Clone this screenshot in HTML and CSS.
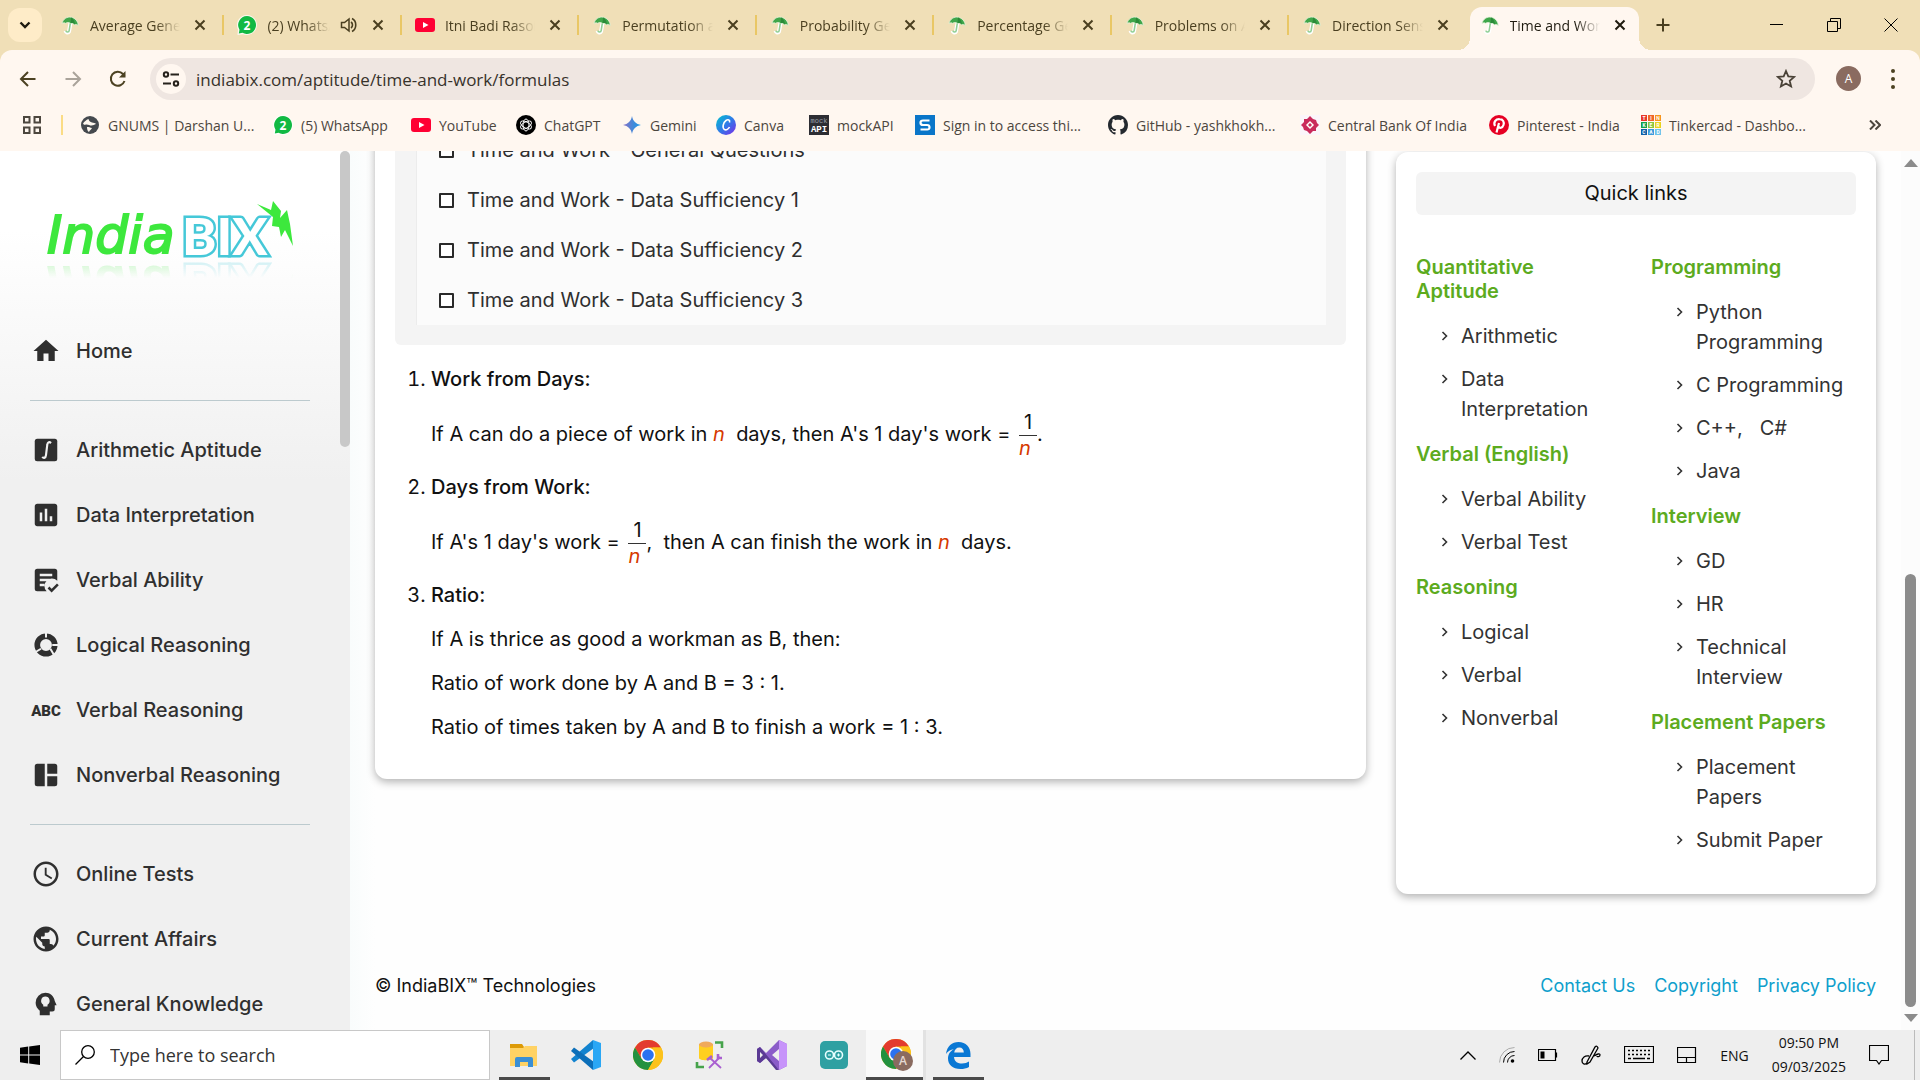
FILE: index.html
```html
<!DOCTYPE html>
<html lang="en">
<head>
<meta charset="utf-8">
<title>Time and Work Formulas</title>
<link rel="stylesheet" href="styles.css">
</head>
<body>
<svg class="defs" aria-hidden="true">
  <symbol id="umbrella" viewBox="0 0 20 20"><path d="M10.500 8 9 16.500a1.800 1.800 0 0 1-3.400-.6" fill="none" stroke="#fff" stroke-width="4"/><path d="M10.500 7 9.200 15.500c-.2 2-3 2.100-3.300.2" fill="none" stroke="#8fcf95" stroke-width="1.600"/><path d="M2 8.500C3 4 7 1.500 11 2.200c4 .6 7 4 7.300 8.200-1.300-1-2.500-1.200-3.600-.6-1.200-1.400-2.600-1.900-4.200-1.500C8.600 7.200 7 7.300 5.600 8.300 4.300 7.600 3.200 7.700 2 8.500z" fill="#3fa64a" stroke="#e6f2dc" stroke-width=".8"/><path d="M10.500 8.300c2-.6 3.500 0 4.200 1.500.4-3-1-6-3.700-7.600" fill="#2b8a39"/></symbol>
  <symbol id="close" viewBox="0 0 20 20"><path d="M5.500 5.500l9 9m0-9l-9 9" stroke="currentColor" stroke-width="2" fill="none"/></symbol>
  <symbol id="wa" viewBox="0 0 20 20"><path d="M10 0a10 10 0 1 1-4 19.200L.5 20 1 14.500A10 10 0 0 1 10 0z" fill="#fff" opacity=".8"/><path d="M10 1a9 9 0 1 1-4.500 16.800L1.800 18.500l.7-3.800A9 9 0 0 1 10 1z" fill="#11b943"/><text x="10" y="14.500" font-size="12" font-weight="700" text-anchor="middle" fill="#fff" font-family="Open Sans">2</text></symbol>
  <symbol id="yt" viewBox="0 0 20 20"><rect y="3" width="20" height="14" rx="3" fill="#ff0033"/><path d="M8 7l5.500 3L8 13z" fill="#fff"/></symbol>
  <symbol id="chev" viewBox="0 0 8 10"><path d="M1.500 1l4 4-4 4" fill="none" stroke="#333" stroke-width="1.600"/></symbol>
  <symbol id="chrome" viewBox="0 0 30 30"><circle cx="15" cy="15" r="15" fill="#fbbc05"/><path d="M2 7.500A15 15 0 0 1 28 7.500H15L8.500 19z" fill="#e33b2e"/><path d="M2 7.500A15 15 0 0 0 15 30l6.500-11.300L8.500 18.700z" fill="#23913f"/><path d="M28 7.500A15 15 0 0 1 15 30l6.500-11.300L20 7.500z" fill="#fcc21b"/><circle cx="15" cy="15" r="7.300" fill="#fff"/><circle cx="15" cy="15" r="5.800" fill="#2b72f0"/></symbol>
</svg>

<header class="browser">
  <div class="strip">
    <button class="tab-search" aria-label="Search tabs"><svg viewBox="0 0 20 20" width="20" height="20"><path d="M5.500 7.500L10 12l4.500-4.500" fill="none" stroke="#1f1b10" stroke-width="2.400"/></svg></button>
    <div class="tabs">
      <div class="tab"><svg class="fav"><use href="#umbrella"/></svg><span class="title">Average General Q</span><button class="x" aria-label="Close tab"><svg><use href="#close"/></svg></button></div>
      <div class="tab"><svg class="fav"><use href="#wa"/></svg><span class="title">(2) WhatsApp</span><svg class="speaker" viewBox="0 0 18 18"><path d="M1.500 6.500h3L9 3v12l-4.500-3.500h-3z" fill="none" stroke="#4a3f20" stroke-width="1.500"/><path d="M11 6c2 1.500 2 4.500 0 6M12 2.500c5 2.500 5 10.500 0 13" fill="none" stroke="#4a3f20" stroke-width="1.600"/></svg><button class="x" aria-label="Close tab"><svg><use href="#close"/></svg></button></div>
      <div class="tab"><svg class="fav"><use href="#yt"/></svg><span class="title">Itni Badi Rasoi</span><button class="x" aria-label="Close tab"><svg><use href="#close"/></svg></button></div>
      <div class="tab"><svg class="fav"><use href="#umbrella"/></svg><span class="title">Permutation and</span><button class="x" aria-label="Close tab"><svg><use href="#close"/></svg></button></div>
      <div class="tab"><svg class="fav"><use href="#umbrella"/></svg><span class="title">Probability Gen</span><button class="x" aria-label="Close tab"><svg><use href="#close"/></svg></button></div>
      <div class="tab"><svg class="fav"><use href="#umbrella"/></svg><span class="title">Percentage Gen</span><button class="x" aria-label="Close tab"><svg><use href="#close"/></svg></button></div>
      <div class="tab"><svg class="fav"><use href="#umbrella"/></svg><span class="title">Problems on Ag</span><button class="x" aria-label="Close tab"><svg><use href="#close"/></svg></button></div>
      <div class="tab last"><svg class="fav"><use href="#umbrella"/></svg><span class="title">Direction Sense</span><button class="x" aria-label="Close tab"><svg><use href="#close"/></svg></button></div>
      <div class="tab active"><svg class="fav"><use href="#umbrella"/></svg><span class="title">Time and Work</span><button class="x" aria-label="Close tab"><svg><use href="#close"/></svg></button></div>
    </div>
    <button class="new-tab" aria-label="New tab"><svg viewBox="0 0 20 20" width="20" height="20"><path d="M10 3.500v13M3.500 10h13" stroke="#4a3f20" stroke-width="2"/></svg></button>
    <div class="win">
      <button aria-label="Minimize"><svg viewBox="0 0 14 14" width="14" height="14"><path d="M0 6.500h13" stroke="#000"/></svg></button>
      <button aria-label="Restore"><svg viewBox="0 0 14 14" width="14" height="14"><path d="M.5 3.500h10v10H.5zM3.500 3V.5h10v10H11" fill="none" stroke="#000"/></svg></button>
      <button aria-label="Close"><svg viewBox="0 0 14 14" width="14" height="14"><path d="M.5.500l13 13m0-13l-13 13" stroke="#000"/></svg></button>
    </div>
  </div>
  <div class="toolbar">
    <button class="nav" aria-label="Back"><svg viewBox="0 0 20 20" width="20" height="20"><path d="M17.500 10H3.500M10 3l-7 7 7 7" fill="none" stroke="#4c4222" stroke-width="2"/></svg></button>
    <button class="nav" aria-label="Forward"><svg viewBox="0 0 20 20" width="20" height="20"><path d="M2.500 10h14M10 3l7 7-7 7" fill="none" stroke="#aaa39a" stroke-width="2"/></svg></button>
    <button class="nav" aria-label="Reload"><svg viewBox="0 0 20 20" width="20" height="20"><path d="M16.500 12A7 7 0 1 1 15 5l1.500 2" fill="none" stroke="#4c4222" stroke-width="2"/><path d="M17.500 2v6.500H11z" fill="#4c4222"/></svg></button>
    <div class="omnibox">
      <button class="site" aria-label="Site information"><svg viewBox="0 0 18 18" width="18" height="18"><g fill="none" stroke="#26221c" stroke-width="2"><circle cx="4" cy="4.500" r="2.200"/><path d="M8.500 4.500H17M1 13.500h8"/><circle cx="14" cy="13.500" r="2.200"/></g></svg></button>
      <input class="url" type="text" aria-label="Address" value="indiabix.com/aptitude/time-and-work/formulas">
      <button class="star" aria-label="Bookmark this tab"><svg viewBox="0 0 20 20" width="20" height="20"><path d="M10 2l2.300 5.400 5.900.5-4.500 3.900 1.400 5.700-5.100-3-5.100 3 1.400-5.700L1.800 7.900l5.900-.5z" fill="none" stroke="#4a4237" stroke-width="1.800"/></svg></button>
    </div>
    <button class="avatar" aria-label="Profile">A</button>
    <button class="dots" aria-label="Menu"><svg viewBox="0 0 6 24" width="6" height="24"><g fill="#4c4222"><circle cx="3" cy="4" r="2"/><circle cx="3" cy="12" r="2"/><circle cx="3" cy="20" r="2"/></g></svg></button>
  </div>
  <nav class="bookmarks" aria-label="Bookmarks">
    <button class="apps" aria-label="Apps"><svg viewBox="0 0 18 18" width="18" height="18"><path d="M1 1h5.500v5.500H1zM11.500 1H17v5.500h-5.500zM1 11.500h5.500V17H1zM11.500 11.500H17V17h-5.500z" fill="none" stroke="#4c463e" stroke-width="2"/></svg></button>
    <a href="#"><svg class="fav" viewBox="0 0 20 20"><circle cx="10" cy="10" r="9" fill="#45494e"/><path d="M3 8.500c1.500-2 3-3.500 5.500-4.500.5 2.500 2 3 3.500 3.500 1.500.7 3 0 4 1.500-2 .5-2.500 1.500-4.500 1.500S8 9 6 9.500 4 10 3 8.500zM7 12c2 0 3 .5 5 1-.5 1.800-2.500 2-3 4C7.500 16.500 7 14 7 12z" fill="#fff8f0"/></svg>GNUMS | Darshan U...</a>
    <a href="#"><svg class="fav"><use href="#wa"/></svg>(5) WhatsApp</a>
    <a href="#"><svg class="fav"><use href="#yt"/></svg>YouTube</a>
    <a href="#"><svg class="fav" viewBox="0 0 20 20"><circle cx="10" cy="10" r="10" fill="#000"/><g fill="none" stroke="#fff" stroke-width="1"><ellipse cx="10" cy="10" rx="3" ry="6"/><ellipse cx="10" cy="10" rx="3" ry="6" transform="rotate(60 10 10)"/><ellipse cx="10" cy="10" rx="3" ry="6" transform="rotate(120 10 10)"/></g></svg>ChatGPT</a>
    <a href="#"><svg class="fav" viewBox="0 0 20 20"><defs><linearGradient id="gem"><stop offset="0" stop-color="#8a6fc4"/><stop offset=".6" stop-color="#3f8bdb"/><stop offset="1" stop-color="#1b9ae8"/></linearGradient></defs><path d="M10 1c.8 5 4 8.200 9 9-5 .8-8.200 4-9 9-.8-5-4-8.200-9-9 5-.8 8.200-4 9-9z" fill="url(#gem)"/></svg>Gemini</a>
    <a href="#"><svg class="fav" viewBox="0 0 20 20"><defs><linearGradient id="cv" x1="0" y1="0" x2="1" y2="1"><stop offset="0" stop-color="#00c4cc"/><stop offset=".5" stop-color="#2f7be8"/><stop offset="1" stop-color="#7d2ae8"/></linearGradient></defs><circle cx="10" cy="10" r="10" fill="url(#cv)"/><path d="M13.500 7.500c.8-2.500-1.500-3.500-3.500-2-3 2.200-4 7.500-1.500 9 1.800 1 4-.5 5-2.500" fill="none" stroke="#fff" stroke-width="1.600"/></svg>Canva</a>
    <a href="#"><svg class="fav" viewBox="0 0 20 20"><rect width="20" height="20" fill="#2d2d33"/><text x="10" y="8" font-size="7" text-anchor="middle" fill="#9aa0ac" font-family="Liberation Mono">mock</text><text x="10" y="17" font-size="9" font-weight="700" text-anchor="middle" fill="#fff" font-family="Liberation Mono">API</text></svg>mockAPI</a>
    <a href="#"><svg class="fav" viewBox="0 0 20 20"><rect width="20" height="20" fill="#0a76c9"/><path d="M14.500 5.500H8q-2.500 0-2.500 2.200T8 10h4q2.500 0 2.500 2.300T12 14.500H5.500" fill="none" stroke="#fff" stroke-width="2.200"/></svg>Sign in to access thi...</a>
    <a href="#"><svg class="fav" viewBox="0 0 16 16"><path fill="#24292f" d="M8 0C3.580 0 0 3.580 0 8c0 3.540 2.290 6.530 5.470 7.590.4.070.55-.17.55-.38 0-.19-.01-.82-.01-1.490-2.010.37-2.530-.49-2.690-.94-.09-.23-.48-.94-.82-1.130-.28-.15-.68-.52-.01-.53.63-.01 1.080.58 1.230.82.720 1.210 1.870.87 2.330.66.070-.52.280-.87.510-1.070-1.780-.2-3.640-.89-3.640-3.950 0-.87.310-1.590.82-2.150-.08-.2-.36-1.020.08-2.120 0 0 .67-.21 2.200.82.640-.18 1.320-.27 2-.27s1.360.09 2 .27c1.530-1.040 2.200-.82 2.200-.82.440 1.100.16 1.920.08 2.120.51.560.82 1.270.82 2.150 0 3.070-1.870 3.750-3.650 3.950.29.25.54.73.54 1.480 0 1.070-.01 1.930-.01 2.200 0 .21.150.46.550.38A8.010 8.010 0 0 0 16 8c0-4.420-3.580-8-8-8z"/></svg>GitHub - yashkhokh...</a>
    <a href="#"><svg class="fav" viewBox="0 0 20 20"><rect width="20" height="20" fill="#fbf5fa"/><path d="M10 1l3 3 3 1 1 3 2 2-3 3v3h-3l-3 3-3-3-3-1-1-3-2-2 3-3V4h3z" fill="#c92a5c"/><path d="M10 6l4 4-4 4-4-4z" fill="#fff"/><path d="M10 8l2 2-2 2-2-2z" fill="#c92a5c"/></svg>Central Bank Of India</a>
    <a href="#"><svg class="fav" viewBox="0 0 20 20"><circle cx="10" cy="10" r="10" fill="#e60023"/><path d="M10 8L7.500 17.500M6 11c-2-4 1-7 4.500-6.800C14 4.300 15.500 7 14.500 10c-1 3.200-4 3.500-5 1.500" fill="none" stroke="#fff" stroke-width="2.200"/></svg>Pinterest - India</a>
    <a href="#"><svg class="fav" viewBox="0 0 20 20"><g><path d="M0 0h6v6H0z" fill="#e8382a"/><path d="M7 0h6v6H7z" fill="#f06529"/><path d="M14 0h6v6h-6z" fill="#f7941d"/><path d="M0 7h6v6H0z" fill="#12a14b"/><path d="M7 7h6v6H7z" fill="#8cc63f"/><path d="M14 7h6v6h-6z" fill="#e8d21d"/><path d="M0 14h6v6H0z" fill="#0f5fa8"/><path d="M7 14h6v6H7z" fill="#3a9bdc"/><path d="M14 14h6v6h-6z" fill="#6fc3ea"/></g><g font-family="Roboto" font-weight="700" font-size="5" fill="#fff" text-anchor="middle"><text x="3" y="5">T</text><text x="10" y="5">I</text><text x="17" y="5">N</text><text x="3" y="12">K</text><text x="10" y="12">E</text><text x="17" y="12">R</text><text x="3" y="19">C</text><text x="10" y="19">A</text><text x="17" y="19">D</text></g></svg>Tinkercad - Dashbo...</a>
    <button class="more" aria-label="More bookmarks"><svg viewBox="0 0 12 10" width="12" height="10"><path d="M1 .500l4.500 4.500L1 9.500M6.500.500L11 5l-4.500 4.500" fill="none" stroke="#4c463e" stroke-width="2"/></svg></button>
  </nav>
</header>

<div class="page">
  <aside class="side">
    <div class="side-body">
    <a class="logo" href="#" aria-label="IndiaBIX"><svg viewBox="0 0 252 60" width="252" height="60">
      <text x="2" y="53" class="logo-india">India</text>
      <text x="137" y="55" class="logo-bix">BIX</text>
      <path d="M212 4l14 6 2-9 8 10-1 7 7-8 3 14 3 22-8-16-4 7-2-10-7-1 1-9z" fill="#3de83d"/></svg></a>
    <nav class="menu" aria-label="Sections">
      <a href="#"><svg viewBox="0 0 24 24"><path d="M10 20v-6h4v6h5v-8h3L12 3 2 12h3v8z"/></svg>Home</a>
      <hr>
      <a href="#"><svg viewBox="0 0 24 24"><path fill-rule="evenodd" d="M5 3h14a2 2 0 0 1 2 2v14a2 2 0 0 1-2 2H5a2 2 0 0 1-2-2V5a2 2 0 0 1 2-2z"/><path d="M16 6.500c-1.500-1.500-2.800-.5-3 1.500l-1 8c-.3 2.500-1.800 3-3 1.500" fill="none" stroke="#f2f2f2" stroke-width="1.700"/></svg>Arithmetic Aptitude</a>
      <a href="#"><svg viewBox="0 0 24 24"><path d="M19 3H5c-1.100 0-2 .9-2 2v14c0 1.100.9 2 2 2h14c1.100 0 2-.9 2-2V5c0-1.100-.9-2-2-2zM9 17H7v-7h2v7zm4 0h-2V7h2v10zm4 0h-2v-4h2v4z"/></svg>Data Interpretation</a>
      <a href="#"><svg viewBox="0 0 24 24"><path d="M5 3h14a2 2 0 0 1 2 2v7.500a6 6 0 0 0-8.500 8.500H5a2 2 0 0 1-2-2V5a2 2 0 0 1 2-2z"/><path d="M7 8h10M7 12h8M7 16h4" stroke="#f0f0f0" stroke-width="2"/><path d="M14 18l2.500 2.500L21.500 15.500" fill="none" stroke="#2f2f2f" stroke-width="2"/></svg>Verbal Ability</a>
      <a href="#"><svg viewBox="0 0 24 24"><circle cx="12" cy="12" r="7" fill="none" stroke="#2f2f2f" stroke-width="4.500"/><path d="M12 6V1M17 12h6M8 15l-5 3M15.500 15l3.500 6" stroke="#f0f0f0" stroke-width="1.600"/></svg>Logical Reasoning</a>
      <a href="#"><svg viewBox="0 0 24 24"><text x="12" y="17" text-anchor="middle" class="abc">ABC</text></svg>Verbal Reasoning</a>
      <a href="#"><svg viewBox="0 0 24 24"><path d="M11 21H5a2 2 0 0 1-2-2V5a2 2 0 0 1 2-2h6zM13 11V3h6a2 2 0 0 1 2 2v6zM13 13h8v6a2 2 0 0 1-2 2h-6z"/></svg>Nonverbal Reasoning</a>
      <hr>
      <a href="#"><svg viewBox="0 0 24 24"><path d="M11.990 2C6.470 2 2 6.480 2 12s4.470 10 9.990 10C17.520 22 22 17.520 22 12S17.520 2 11.990 2zM12 20c-4.420 0-8-3.580-8-8s3.580-8 8-8 8 3.580 8 8-3.580 8-8 8zm.5-13H11v6l5.250 3.150.75-1.230-4.500-2.670z"/></svg>Online Tests</a>
      <a href="#"><svg viewBox="0 0 24 24"><path d="M12 2C6.480 2 2 6.480 2 12s4.480 10 10 10 10-4.480 10-10S17.520 2 12 2zm-1 17.930c-3.950-.49-7-3.850-7-7.930 0-.62.080-1.210.21-1.790L9 15v1c0 1.100.9 2 2 2v1.930zm6.900-2.540c-.26-.81-1-1.390-1.900-1.390h-1v-3c0-.55-.45-1-1-1H8v-2h2c.55 0 1-.45 1-1V7h2c1.100 0 2-.9 2-2v-.41c2.930 1.190 5 4.060 5 7.410 0 2.080-.8 3.970-2.100 5.390z"/></svg>Current Affairs</a>
      <a href="#"><svg viewBox="0 0 24 24"><path fill-rule="evenodd" d="M11.500 3A8 8 0 0 0 3.700 11c0 2.600 1.300 4.900 3.300 6.300V21h8v-3h2a2 2 0 0 0 2-2v-3h1.500L19 9.500C18.400 5.800 15.300 3 11.500 3z"/><path d="M11.500 6a3.500 3.500 0 0 1 1.700 6.500V14H9.800v-1.500A3.500 3.500 0 0 1 11.500 6z" fill="#f0f0f0"/></svg>General Knowledge</a>
    </nav>
    </div>
    <div class="side-bar"><div class="side-thumb"></div></div>
  </aside>

  <main class="main">
    <div class="cols">
      <article class="card article">
        <div class="tests">
          <ul>
            <li><label><input type="checkbox">Time and Work - General Questions</label></li>
            <li><label><input type="checkbox">Time and Work - Data Sufficiency 1</label></li>
            <li><label><input type="checkbox">Time and Work - Data Sufficiency 2</label></li>
            <li><label><input type="checkbox">Time and Work - Data Sufficiency 3</label></li>
          </ul>
        </div>
        <ol class="formulas">
          <li><h3>Work from Days:</h3>
            <p class="eq">If A can do a piece of work in <i>n</i>&nbsp; days, then A's 1 day's work = <span class="frac"><span>1</span><i>n</i></span>.</p></li>
          <li><h3>Days from Work:</h3>
            <p class="eq">If A's 1 day's work = <span class="frac"><span>1</span><i>n</i></span>,&nbsp; then A can finish the work in <i>n</i>&nbsp; days.</p></li>
          <li><h3>Ratio:</h3>
            <p>If A is thrice as good a workman as B, then:</p>
            <p>Ratio of work done by A and B = 3 : 1.</p>
            <p>Ratio of times taken by A and B to finish a work = 1 : 3.</p></li>
        </ol>
      </article>
      <aside class="card quick">
        <h2>Quick links</h2>
        <div class="quick-cols">
          <div>
            <h4>Quantitative Aptitude</h4>
            <ul>
              <li><svg><use href="#chev"/></svg><a href="#">Arithmetic</a></li>
              <li><svg><use href="#chev"/></svg><a href="#">Data Interpretation</a></li>
            </ul>
            <h4>Verbal (English)</h4>
            <ul>
              <li><svg><use href="#chev"/></svg><a href="#">Verbal Ability</a></li>
              <li><svg><use href="#chev"/></svg><a href="#">Verbal Test</a></li>
            </ul>
            <h4>Reasoning</h4>
            <ul>
              <li><svg><use href="#chev"/></svg><a href="#">Logical</a></li>
              <li><svg><use href="#chev"/></svg><a href="#">Verbal</a></li>
              <li><svg><use href="#chev"/></svg><a href="#">Nonverbal</a></li>
            </ul>
          </div>
          <div>
            <h4>Programming</h4>
            <ul>
              <li><svg><use href="#chev"/></svg><a href="#">Python Programming</a></li>
              <li><svg><use href="#chev"/></svg><a href="#">C Programming</a></li>
              <li><svg><use href="#chev"/></svg><span><a href="#">C++</a>,&nbsp;&nbsp; <a href="#">C#</a></span></li>
              <li><svg><use href="#chev"/></svg><a href="#">Java</a></li>
            </ul>
            <h4>Interview</h4>
            <ul>
              <li><svg><use href="#chev"/></svg><a href="#">GD</a></li>
              <li><svg><use href="#chev"/></svg><a href="#">HR</a></li>
              <li><svg><use href="#chev"/></svg><a href="#">Technical Interview</a></li>
            </ul>
            <h4>Placement Papers</h4>
            <ul>
              <li><svg><use href="#chev"/></svg><a href="#">Placement Papers</a></li>
              <li><svg><use href="#chev"/></svg><a href="#">Submit Paper</a></li>
            </ul>
          </div>
        </div>
      </aside>
    </div>
    <footer class="foot">
      <span>© IndiaBIX™ Technologies</span>
      <nav><a href="#">Contact Us</a><a href="#">Copyright</a><a href="#">Privacy Policy</a></nav>
    </footer>
  </main>

  <div class="scroll">
    <svg viewBox="0 0 14 8" width="14" height="8"><path d="M7 0l7 8H0z" fill="#8b8b8b"/></svg>
    <div class="track"><div class="thumb"></div></div>
    <svg viewBox="0 0 14 8" width="14" height="8"><path d="M0 0h14L7 8z" fill="#8b8b8b"/></svg>
  </div>
</div>

<div class="taskbar">
  <button class="start" aria-label="Start"><svg viewBox="0 0 20 20" width="20" height="20"><path d="M0 2.800L8.200 1.600v7.900H0zM9.200 1.500L20 0v9.500H9.200zM0 10.500h8.200v7.900L0 17.200zM9.200 10.500H20V20L9.200 18.500z"/></svg></button>
  <label class="find"><svg viewBox="0 0 20 20" width="20" height="20"><circle cx="13" cy="7" r="6.300" fill="none" stroke="#000" stroke-width="1.300"/><path d="M8.500 11.500L.5 19.500" stroke="#000" stroke-width="1.300"/></svg><input type="text" placeholder="Type here to search" aria-label="Search"></label>
  <div class="pins">
    <button class="open" aria-label="File Explorer"><svg viewBox="0 0 30 30"><path d="M1 4h12l2 3v5H1z" fill="#dd9a06"/><path d="M1 8h13l2-2h12v20H1z" fill="#ffd264"/><path d="M6 27V19q0-2 2-2h14q2 0 2 2v8h-5v-5h-8v5z" fill="#3b8fd4"/></svg></button>
    <button aria-label="Visual Studio Code"><svg viewBox="0 0 30 30"><path d="M22 0L0 19l3 3.500L23 8z" fill="#1283cf"/><path d="M22 30L0 11l3-3.500L23 22z" fill="#0c6fb9"/><path d="M22 0l8 3v24l-8 3z" fill="#2aa7f5"/></svg></button>
    <button aria-label="Google Chrome"><svg><use href="#chrome"/></svg></button>
    <button aria-label="SQL tools"><svg viewBox="0 0 30 30"><path d="M4 4v14c0 3 14 3 14 0V4z" fill="#ffcf1f"/><ellipse cx="11" cy="4.500" rx="7" ry="3" fill="#f0a95a"/><path d="M20 2.500h7V8M2 22v5h7" fill="none" stroke="#46a34b" stroke-width="2.600"/><path d="M15 18l11 10M25 17L14 28" fill="none" stroke="#a95fd0" stroke-width="1.800"/><path d="M12 20l5-4M23 14v4h4" fill="none" stroke="#a95fd0" stroke-width="2.600"/></svg></button>
    <button aria-label="Visual Studio"><svg viewBox="0 0 30 30"><path d="M0 9l3-2 6 6 13-13 8 4v22l-8 4L9 18l-6 5-3-2z" fill="#8b5cc9"/><path d="M22 0l8 4v22l-8 4z" fill="#c793fa"/><path d="M0 9l3-2 19 23h-3L9 18 3 23l-3-2z" fill="#5b3a94"/><path d="M22 9v12l-7-6zM3 12v6l3-3z" fill="#eee"/></svg></button>
    <button aria-label="Arduino"><svg viewBox="0 0 30 30"><rect x="1" y="1" width="28" height="28" rx="5" fill="#2fa0a2"/><g fill="none" stroke="#e8ffff" stroke-width="1.600"><circle cx="10.500" cy="15" r="4"/><circle cx="19.500" cy="15" r="4"/></g><path d="M9 15h3M18 15h3M19.500 13.500v3" stroke="#e8ffff"/></svg></button>
    <button class="open current" aria-label="Google Chrome, A"><svg viewBox="0 0 32 32"><use href="#chrome" width="30" height="30"/><circle cx="22" cy="22" r="10" fill="#8a6b60"/><text x="22" y="26" text-anchor="middle" font-size="12" font-family="Open Sans" font-weight="600" fill="#e4d8d2">A</text></svg></button>
    <button class="open" aria-label="Microsoft Edge"><svg viewBox="0 0 30 30"><path d="M3 14C4 6 9 2 15.500 2 23 2 27.500 7 27.500 14v3H11c.5 5 4 6.500 8 6.500 3 0 5-.8 7-2v5.500c-2.500 1.500-5.500 2-8.500 2C9.500 29 5 24.500 5 18.500c0-4.500 2.500-7.500 6-9.500C7.500 9.500 4.500 11.500 3 14zm8.200-1.500h9.600c0-3-1.600-5-4.500-5-2.800 0-4.700 2-5.100 5z" fill="#0a78d4"/></svg></button>
  </div>
  <div class="tray">
    <svg viewBox="0 0 16 9" width="16" height="9"><path d="M.5 8.500L8 1l7.500 7.500" fill="none" stroke="#000" stroke-width="1.300"/></svg>
    <svg viewBox="0 0 16 16" width="16" height="16"><g fill="none" stroke="#000"><path d="M.5 15.500a15 15 0 0 1 15-15" stroke="#aaa"/><path d="M4.500 15.500a11 11 0 0 1 11-11M8.500 15.500a7 7 0 0 1 7-7"/></g><circle cx="13.500" cy="14" r="1.800"/></svg>
    <svg viewBox="0 0 20 12" width="20" height="12"><path d="M.5.500h17v11H.5zM18.500 3.500v5" fill="none" stroke="#000" stroke-width="1.200"/><path d="M2.500 2.500h4v7h-4z"/></svg>
    <svg viewBox="0 0 20 20" width="20" height="20"><g fill="none" stroke="#000" stroke-width="1.300"><path d="M6 17L14 2q2-2 3 1L9 17l-3 2z"/><path d="M8 11c-4-1-7 2-7 5s3 4 5 2M13 11c3-2 6-3 6-1s-3 2-3 1"/></g></svg>
    <svg viewBox="0 0 30 18" width="30" height="18"><path d="M.5.500h29v16H.5z" fill="none" stroke="#000" stroke-width="1.200"/><path d="M4 4.500h22M4 8.500h22" stroke="#000" stroke-width="1.300" stroke-dasharray="2 2"/><path d="M4 12.500h3M9 12.500h12M23 12.500h3" stroke="#000" stroke-width="1.300"/></svg>
    <svg viewBox="0 0 20 16" width="20" height="16"><path d="M.5.500h18v15H.5zM.5 10.500h18M9.500 10.500v5" fill="none" stroke="#000" stroke-width="1.200"/></svg>
    <span class="lang">ENG</span>
    <time class="clock">09:50 PM<br>09/03/2025</time>
    <svg viewBox="0 0 20 20" width="20" height="20"><path d="M.5.500h19v15h-7L10 19l-2.500-3.500h-7z" fill="none" stroke="#000" stroke-width="1.200"/></svg>
  </div>
</div>
</body>
</html>
```

FILE: styles.css
```css
* { box-sizing: border-box; }
html, body { height: 100%; }
body {
  margin: 0;
  display: flex;
  flex-direction: column;
  overflow: hidden;
  font-family: Inter, "Liberation Sans", sans-serif;
  font-size: 20px;
  color: #111;
  background: #fff;
}
button { border: 0; padding: 0; margin: 0; background: none; font: inherit; color: inherit; display: flex; align-items: center; justify-content: center; flex: none; }
input { font: inherit; margin: 0; }
a { color: inherit; text-decoration: none; }
ul, ol, h2, h3, h4, p { margin: 0; padding: 0; }
ul { list-style: none; }
svg { flex: none; display: block; }
.defs { position: absolute; width: 0; height: 0; }

/* browser chrome */
.browser { flex: none; background: #f0dfb7; font-family: "Open Sans", "Noto Sans", sans-serif; }
.strip { display: flex; align-items: center; height: 50px; padding-left: 8px; }
.tab-search { width: 34px; height: 34px; border-radius: 12px; background: #feecc8; margin-right: 5px; }
.tabs { display: flex; flex: 0 1 1597px; min-width: 0; height: 50px; }
.tab {
  position: relative;
  isolation: isolate;
  flex: 1 1 0;
  min-width: 0;
  display: flex;
  align-items: center;
  gap: 10px;
  padding: 0 14px 0 13px;
  font-size: 14px;
  color: #4a3f20;
  background: linear-gradient(#e9c765, #e9c765) right center / 2px 20px no-repeat;
}
.tab.last, .tab.active { background: none; }
.tab.active { color: #1f1b10; }
.tab.active::before { content: ""; position: absolute; z-index: -1; inset: 7px 5px 0 3px; border-radius: 12px 12px 0 0; background: #fff7f0; }
.tab.active::after {
  content: ""; position: absolute; z-index: -1; left: -9px; right: -7px; bottom: 0; height: 12px;
  background:
    radial-gradient(circle at 0 0, transparent 12px, #fff7f0 12px) left / 12px 12px no-repeat,
    radial-gradient(circle at 100% 0, transparent 12px, #fff7f0 12px) right / 12px 12px no-repeat;
}
.fav { width: 20px; height: 20px; }
.title { flex: 1; min-width: 0; overflow: hidden; white-space: nowrap; -webkit-mask-image: linear-gradient(90deg, #000 calc(100% - 24px), transparent); mask-image: linear-gradient(90deg, #000 calc(100% - 24px), transparent); }
.speaker { width: 18px; height: 18px; }
.x, .x svg { width: 20px; height: 20px; }
.new-tab { width: 38px; height: 34px; }
.win { display: flex; margin-left: auto; padding-right: 1px; }
.win button { width: 57px; height: 50px; }

.toolbar { display: flex; align-items: center; height: 57px; padding: 0 12px 0 5px; background: #fff7f0; border-radius: 12px 12px 0 0; }
.nav { width: 45px; height: 40px; }
.omnibox { flex: 1; display: flex; align-items: center; height: 42px; margin: 0 21px 0 10px; padding: 0 19px 0 6px; border-radius: 21px; background: #efe6e1; }
.site { width: 30px; height: 30px; border-radius: 15px; background: #fff7f0; }
.url { flex: 1; min-width: 0; height: 34px; margin-left: 10px; padding: 2px 0 0; border: 0; background: none; font-size: 17px; color: #37322b; outline: 0; }
.star { width: 20px; height: 20px; }
.avatar { width: 25px; height: 25px; border-radius: 50%; background: #8a6b60; color: #fff; font-size: 12px; }
.dots { width: 30px; height: 30px; margin-left: 17px; }

.bookmarks {
  display: grid;
  grid-template-columns: 57px 193px 138px 105px 106px 94px 93px 106px 193px 192px 189px 152px 1fr auto;
  align-items: center;
  height: 44px;
  padding: 0 39px 8px 23px;
  background: #fff7f0;
  font-size: 14px;
  color: #4c463e;
}
.bookmarks a { display: flex; align-items: center; gap: 8px; white-space: nowrap; }
.apps { justify-content: flex-start; width: 40px; height: 20px; border-right: 2px solid #fbdc85; }

/* site */
.page { flex: 1; min-height: 0; display: flex; background: #fefefe; }
.side { flex: none; width: 350px; display: flex; overflow: hidden; background: linear-gradient(#fff 80px, #f0f0f0 330px); color: #2f2f2f; }
.side-body { flex: 1; min-width: 0; }
.side-bar { width: 10px; }
.side-thumb { height: 296px; border-radius: 5px; background: #c8c8c8; }
.logo { display: block; height: 167px; padding: 49px 0 0 45px; }
.logo svg { -webkit-box-reflect: below 0 linear-gradient(transparent 70%, rgba(0, 0, 0, .25)); }
.logo-india { font: italic 400 52px "DejaVu Sans", sans-serif; fill: #3de83d; stroke: #3de83d; stroke-width: 2px; }
.logo-bix { font: 900 52px Lato, sans-serif; fill: #fff; stroke: #45c8d8; stroke-width: 5px; paint-order: stroke; }
.menu a { display: flex; align-items: center; gap: 15px; height: 65px; padding-left: 31px; font-size: 20px; font-weight: 500; white-space: nowrap; }
.menu svg { width: 30px; height: 30px; fill: #2f2f2f; overflow: visible; }
.abc { font: 900 12px Roboto, sans-serif; }
.menu hr { height: 1px; margin: 17px 30px 16px; border: 0; background: #bccace; }

.main { flex: 1; min-width: 0; display: flex; flex-direction: column; overflow: hidden; padding: 0 25px 32px; background: linear-gradient(90deg, #f9fcfc, #fefefe 25px); }
.cols { display: flex; align-items: flex-start; gap: 30px; }
.card { background: #fff; border-radius: 12px; box-shadow: 0 3px 8px rgba(0, 0, 0, .3); }
.article { flex: 1; min-width: 0; margin-top: -26px; padding: 0 20px 37px; }
.tests { padding: 0 20px 20px 21px; border-radius: 0 0 6px 6px; background: #f4f4f4; }
.tests ul { padding-left: 22px; border-left: 1px solid #ececec; background: #fbfbfb; }
.tests label { display: flex; align-items: center; gap: 13px; height: 50px; color: #2f2f2f; }
.tests input { appearance: none; width: 15px; height: 15px; border: 2px solid #2a2a2a; border-radius: 1px; background: #fff; }
.formulas { padding: 19px 0 0 36px; }
.formulas li { line-height: 30px; }
.formulas h3 { font-size: 20px; font-weight: 500; line-height: 30px; margin-bottom: 14px; }
.formulas p { margin-bottom: 14px; }
.formulas li:last-child p:last-child { margin-bottom: 0; }
.formulas i { color: #d63a00; }
.eq { line-height: 52px; height: 50px; }
.frac { display: inline-block; vertical-align: middle; width: 18px; margin-left: 3px; line-height: 25px; }
.frac span, .frac i { display: block; }
.frac span { border-bottom: 1px solid #333; text-align: center; }

.quick { flex: none; width: 480px; margin-top: 1px; padding: 20px 20px 39px; }
.quick h2 { height: 43px; line-height: 43px; border-radius: 6px; background: #f4f4f4; text-align: center; font-size: 20px; font-weight: 400; }
.quick-cols { display: grid; grid-template-columns: 1fr 1fr; gap: 30px; padding-top: 40px; }
.quick h4 { font-size: 20px; font-weight: 600; line-height: 24px; color: #5cab1e; margin-bottom: 18px; }
.quick ul { display: flex; flex-direction: column; gap: 13px; margin-bottom: 18px; padding-left: 25px; }
.quick ul:last-child { margin-bottom: 0; }
.quick li { display: flex; gap: 12px; line-height: 30px; color: #333; }
.quick li svg { width: 8px; height: 10px; margin-top: 10px; }

.foot { display: flex; justify-content: space-between; margin-top: auto; font-size: 18px; line-height: 24px; }
.foot nav { display: flex; gap: 19px; color: #0f9fcc; }

.scroll { flex: none; width: 19px; display: flex; flex-direction: column; align-items: center; padding: 8px 0; background: #fcfcfc; }
.track { flex: 1; display: flex; flex-direction: column; justify-content: flex-end; padding-bottom: 7px; }
.thumb { width: 11px; height: 433px; border-radius: 6px; background: #8b8b8b; }

/* taskbar */
.taskbar { flex: none; display: flex; align-items: stretch; height: 50px; background: #eee; font-family: "Open Sans", "Noto Sans", sans-serif; color: #111; }
.start { width: 60px; }
.find { display: flex; align-items: center; gap: 15px; width: 430px; padding-left: 14px; border: 1px solid #c8c8c8; background: #fff; }
.find input { flex: 1; min-width: 0; border: 0; padding: 0; outline: 0; font-size: 18px; background: none; }
.find input::placeholder { color: #333; opacity: 1; }
.pins { display: flex; gap: 2px; padding-left: 4px; }
.pins button { width: 60px; }
.pins svg { width: 30px; height: 30px; }
.pins .open { background: linear-gradient(#4a4a4a, #4a4a4a) center bottom / 51px 3px no-repeat; }
.pins .current { background: linear-gradient(#4a4a4a, #4a4a4a) center bottom / 100% 3px no-repeat #f9f9f9; border-right: 3px solid #e2e2e2; }
.pins .current svg { width: 32px; height: 32px; margin-left: 4px; }
.tray { display: flex; align-items: center; gap: 23px; margin-left: auto; margin-right: 5px; padding-right: 25px; border-right: 1px solid #bbb; }
.lang { font-size: 14px; }
.clock { font-size: 14px; line-height: 24px; text-align: center; }
```
